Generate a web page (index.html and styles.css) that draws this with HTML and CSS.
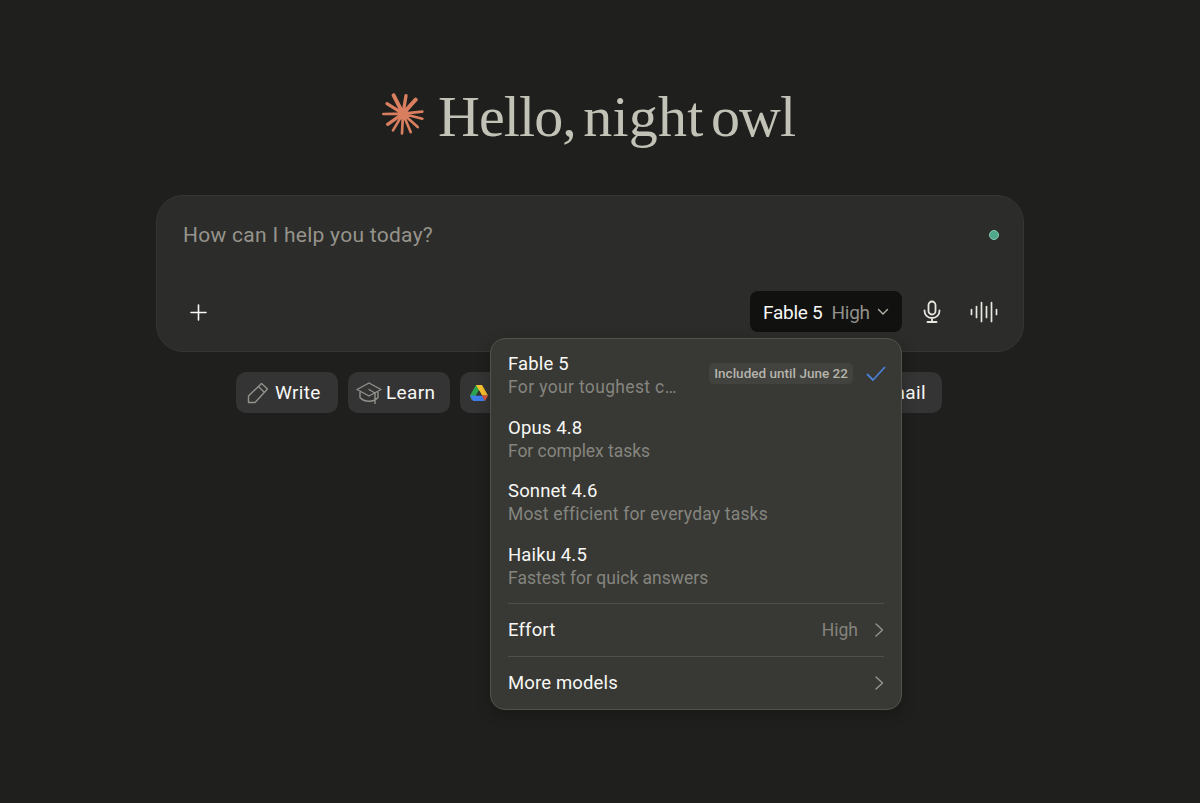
FILE: index.html
```
<!DOCTYPE html>
<html lang="en">
<head>
    <meta charset="utf-8">
    <title>New chat</title>
    <link rel="stylesheet" href="styles.css">
</head>
<body>
    <div class="page">
        <h1 class="greeting">
            <svg class="burst" viewBox="36 38 126 126">
                <path stroke-width="8" d="M99 100L40 101M99 100L157 94M99 100L157 115M99 100L143 140M99 100L122 155M99 100L96 159M99 100L69 150"/>
                <path stroke-width="10" d="M99 100L51 70M99 100L108 46M99 100L53 132"/>
                <path stroke-width="12" d="M99 100L71 45M99 100L137 58"/>
                <circle cx="99" cy="100" r="16"/>
            </svg>
            <span>Hello, <span class="night">night</span> owl</span>
        </h1>

        <div class="composer">
            <div class="prompt">
                <span class="placeholder">How can I help you today?</span>
                <i class="dot"></i>
            </div>
            <div class="tools">
                <svg class="plus" width="17" height="17" viewBox="0 0 17 17"><path d="M8.500 1v15M1 8.500h15"/></svg>
                <div class="picker">
                    <div class="model-btn">
                        <span class="model">Fable 5</span>
                        <span class="level">High</span>
                        <svg width="12" height="8" viewBox="0 0 12 8"><path d="M1.500 1.500L6 6l4.500-4.500"/></svg>
                    </div>
                    <div class="menu">
                        <div class="item">
                            <div class="info">
                                <div class="name">Fable 5</div>
                                <div class="desc d1">For your toughest c…</div>
                            </div>
                            <span class="badge">Included until June 22</span>
                            <svg class="check" width="20" height="16" viewBox="0 0 20 16"><path d="M1.500 8.500L7 14L18.500 1.500"/></svg>
                        </div>
                        <div class="item">
                            <div class="info">
                                <div class="name">Opus 4.8</div>
                                <div class="desc d2">For complex tasks</div>
                            </div>
                        </div>
                        <div class="item">
                            <div class="info">
                                <div class="name">Sonnet 4.6</div>
                                <div class="desc d3">Most efficient for everyday tasks</div>
                            </div>
                        </div>
                        <div class="item">
                            <div class="info">
                                <div class="name">Haiku 4.5</div>
                                <div class="desc d4">Fastest for quick answers</div>
                            </div>
                        </div>
                        <div class="link first">
                            <span class="name">Effort</span>
                            <span class="value">High</span>
                            <svg width="9" height="14" viewBox="0 0 9 14"><path d="M1 1l6.500 6L1 13"/></svg>
                        </div>
                        <div class="link">
                            <span class="name">More models</span>
                            <svg width="9" height="14" viewBox="0 0 9 14"><path d="M1 1l6.500 6L1 13"/></svg>
                        </div>
                    </div>
                </div>
                <svg class="mic" width="18" height="24" viewBox="0 0 18 24">
                    <rect x="5.500" y="1.500" width="7" height="13" rx="3.500"/>
                    <path d="M1.500 10.500c0 4.500 3 7.500 7.500 7.500s7.500-3 7.500-7.500M9 18v4M4.500 22h9"/>
                </svg>
                <svg class="wave" width="28" height="22" viewBox="0 0 28 22">
                    <path d="M1.500 8.500v5M6.500 5.500v11M11.500 1.500v19M16.500 5.500v11M21.500 1.500v19M26.500 8.500v5"/>
                </svg>
            </div>
        </div>

        <div class="chips">
            <div class="chip write">
                <svg width="22" height="22" viewBox="0 0 22 22">
                    <path d="M1.500 20.500v-6.500L14.500 1.500l6 5.500L8 20.500zM11.500 4.500l5.500 5.500"/>
                </svg>
                <span>Write</span>
            </div>
            <div class="chip learn">
                <svg width="26" height="22" viewBox="0 0 26 22">
                    <path d="M1 7.500L13 1l12 6.500L13 14zM4 10v5.500c4 5 14 5 18 0v-5.500M13 7.500l6 3.500v10.500"/>
                </svg>
                <span>Learn</span>
            </div>
            <div class="chip drive">
                <svg class="color" width="18" height="16" viewBox="0 0 18 16">
                    <path fill="#2da44f" d="M6 0h3v5.500L4.500 13 1.500 15 0 10.500z"/>
                    <path fill="#f9c22e" d="M6 0h6l6 10.500h-6z"/>
                    <path fill="#3f7de8" d="M0 10.500h12L15 16H3z"/>
                    <path fill="#e2553d" d="M12 10.500h6L15 16z"/>
                    <path fill="#343434" d="M9 5.300l3 5.200H6z"/>
                </svg>
            </div>
            <div class="chip gmail"><span>Gmail</span></div>
        </div>
    </div>
</body>
</html>
```
FILE: styles.css
```
* {
    margin: 0;
    padding: 0;
    box-sizing: border-box;
}
body {
    height: 803px;
    background: #1f1f1d;
    font-family: Roboto, "Liberation Sans", sans-serif;
    color: #f8f8f5;
    overflow: hidden;
}
svg {
    display: block;
    flex: none;
    fill: none;
    stroke-linecap: round;
    stroke-linejoin: round;
}
.page {
    width: 868px;
    margin-left: 156px;
    padding-top: 82px;
}

/* greeting */
.greeting {
    display: flex;
    align-items: center;
    height: 70px;
    margin-bottom: 43px;
    padding-left: 226px;
    font: 400 58px/70px "Liberation Serif", serif;
    letter-spacing: -0.9px;
    word-spacing: -6.2px;
    color: #c3c2b7;
    white-space: nowrap;
}
.night {
    letter-spacing: 0.2px;
}
.burst {
    width: 42px;
    height: 42px;
    margin: -6px 14px 0 0;
    stroke: #d97f60;
}
.burst circle {
    fill: #d97f60;
    stroke: none;
}

/* composer */
.composer {
    height: 157px;
    padding: 24px 24px 19px 26px;
    background: #2c2c2a;
    border: 1px solid #353533;
    border-radius: 27px;
    display: flex;
    flex-direction: column;
    justify-content: space-between;
}
.prompt {
    display: flex;
    justify-content: space-between;
    align-items: center;
    height: 30px;
}
.placeholder {
    margin-top: -1px;
    font-size: 21px;
    letter-spacing: 0.28px;
    color: #96948c;
}
.dot {
    width: 10px;
    height: 10px;
    border-radius: 50%;
    background: #4da78b;
    border: 1px solid #8cc8b5;
}
.tools {
    display: flex;
    align-items: center;
    height: 41px;
}
.plus {
    margin: 1px auto 0 7px;
    stroke: #f8f8f5;
    stroke-width: 1.6;
}
.picker {
    position: relative;
    width: 152px;
}
.model-btn {
    display: flex;
    align-items: center;
    height: 41px;
    padding: 1px 13px 0;
    background: #111110;
    border-radius: 8px;
    font-size: 19px;
    letter-spacing: -0.25px;
    white-space: nowrap;
}
.model-btn svg {
    margin-left: auto;
    stroke: #b5b3aa;
    stroke-width: 1.4;
}
.level {
    margin-left: 9px;
    color: #92908a;
}
.mic {
    margin-left: 21px;
    stroke: #e8e7e1;
    stroke-width: 1.8;
}
.wave {
    margin: 0 1px 0 29px;
    stroke: #e8e7e1;
    stroke-width: 1.7;
}

/* model menu */
.menu {
    position: absolute;
    top: 47px;
    right: 0;
    z-index: 2;
    width: 412px;
    height: 372px;
    padding: 5px 17px 0;
    background: #383834;
    border: 1px solid #52524e;
    border-radius: 15px;
    box-shadow: 0 4px 14px rgba(0, 0, 0, .25);
}
.item {
    display: flex;
    align-items: center;
    height: 63.75px;
}
.info {
    flex: 1;
    white-space: nowrap;
}
.name {
    font-size: 18.5px;
    line-height: 23px;
    letter-spacing: 0.15px;
}
.desc {
    font-size: 17.5px;
    line-height: 23px;
    color: #85857f;
}
.d1 {
    letter-spacing: 0.35px;
}
.d2 {
    letter-spacing: -0.05px;
}
.d3 {
    letter-spacing: 0.18px;
}
.d4 {
    letter-spacing: 0;
}
.badge {
    height: 21px;
    padding: 0 5px;
    margin: 0 13px 4px 0;
    border-radius: 5px;
    background: #42423e;
    font-size: 13.5px;
    font-weight: 500;
    line-height: 21px;
    letter-spacing: 0.02px;
    color: #b5b4ab;
}
.check {
    margin: 0 -2px 4px 0;
    stroke: #4a80d6;
    stroke-width: 1.8;
}
.link {
    display: flex;
    align-items: center;
    height: 53px;
    padding-bottom: 1px;
    border-top: 1px solid #50504b;
}
.link.first {
    margin-top: 4px;
}
.link .name {
    flex: 1;
    padding-top: 2px;
}
.link svg {
    stroke: #96958e;
    stroke-width: 1.4;
}
.value {
    margin-right: 17px;
    font-size: 17.5px;
    color: #85837d;
}

/* quick actions */
.chips {
    display: flex;
    gap: 10px;
    margin: 20px 0 0 80px;
}
.chip {
    display: flex;
    align-items: center;
    height: 41px;
    padding: 0 11px;
    border-radius: 10px;
    background: #343434;
    font-size: 19px;
    letter-spacing: 0.35px;
    white-space: nowrap;
}
.chip svg {
    margin-right: 6px;
    stroke: #92918b;
    stroke-width: 1.4;
}
.chip .color {
    stroke: none;
}
.write {
    width: 102px;
}
.learn {
    width: 102px;
    padding-left: 8px;
}
.learn svg {
    margin-right: 4px;
}
.drive {
    width: 324px;
    padding-left: 10px;
}
.gmail {
    width: 148px;
    padding-right: 16px;
    justify-content: flex-end;
}
```
